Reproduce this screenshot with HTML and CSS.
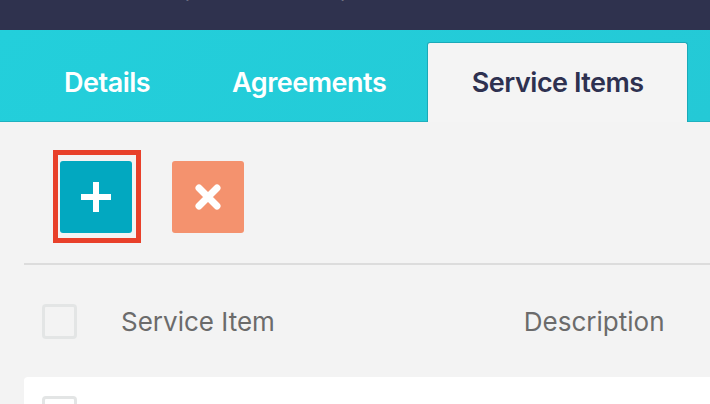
FILE: index.html
```html
<!DOCTYPE html>
<html>
<head>
<meta charset="utf-8">
<link rel="stylesheet" href="styles.css">
</head>
<body>
  <header class="topbar">
    <div class="crumbs">Customer Site / Maintenance / Contracts</div>
  </header>
  <nav class="tabs">
    <div class="tab">Details</div>
    <div class="tab">Agreements</div>
    <div class="tab active">Service Items</div>
  </nav>
  <main class="content">
    <div class="toolbar">
      <div class="highlight">
        <button class="btn btn-add" aria-label="Add">
          <svg width="30" height="30" viewBox="0 0 30 30"><path d="M12 0h6v12h12v6H18v12h-6V18H0v-6h12z" fill="#fff"/></svg>
        </button>
      </div>
      <button class="btn btn-del" aria-label="Delete">
        <svg width="28" height="28" viewBox="0 0 28 28"><path d="M5 5L23 23M23 5L5 23" stroke="#fff" stroke-width="7" stroke-linecap="round"/></svg>
      </button>
    </div>
    <div class="divider"></div>
    <div class="thead">
      <span class="check"></span>
      <span class="col col-item">Service Item</span>
      <span class="col col-desc">Description</span>
    </div>
    <div class="row">
      <span class="check"></span>
    </div>
  </main>
</body>
</html>
```
FILE: styles.css
```css
html, body {
  margin: 0;
  padding: 0;
  background: #f3f3f3;
  font-family: Inter, "Noto Sans", sans-serif;
  overflow: hidden;
}
.topbar {
  height: 30px;
  background: #2f324e;
  overflow: hidden;
}
.crumbs {
  color: #fff;
  font-size: 21px;
  line-height: 22px;
  margin-top: -20px;
  padding-left: 32px;
  word-spacing: 4px;
  white-space: nowrap;
}
.tabs {
  height: 91px;
  background: linear-gradient(135deg, #23cfdb, #24c9d6);
  border-bottom: 1px solid #1eb1bf;
  display: flex;
  align-items: flex-end;
  padding-left: 23px;
}
.tab {
  height: 80px;
  margin-bottom: -1px;
  padding: 0 41px;
  display: flex;
  align-items: center;
  font-size: 27px;
  font-weight: 600;
  color: #fff;
  letter-spacing: -0.5px;
  box-sizing: border-box;
}
.tab.active {
  background: #f4f4f4;
  color: #2e3150;
  border: 1px solid #1aa9b8;
  border-bottom: none;
  border-radius: 3px 3px 0 0;
  width: 261px;
  padding: 0;
  justify-content: center;
}
.content {
  padding-top: 28px;
}
.toolbar {
  display: flex;
  align-items: center;
  padding-left: 53px;
  gap: 31px;
}
.highlight {
  border: 5px solid #e8402a;
  padding: 6px 4px 5px 2px;
  display: flex;
}
.btn {
  width: 72px;
  height: 72px;
  border: none;
  border-radius: 3px;
  padding: 0;
  display: flex;
  align-items: center;
  justify-content: center;
}
.btn-add { background: #02a8c0; }
.btn-del { background: #f4926e; }
.divider {
  margin: 20px 0 0 24px;
  height: 2px;
  background: #dcdcdc;
}
.thead {
  height: 112px;
  display: flex;
  align-items: center;
  padding-left: 42px;
  color: #6b6b6b;
  font-size: 26px;
  letter-spacing: 0;
}
.check {
  display: block;
  width: 35px;
  height: 35px;
  box-sizing: border-box;
  border: 3px solid #e3e5e5;
  border-radius: 4px;
  flex: none;
}
.col-item { margin-left: 44px; }
.col-desc { margin-left: 249px; }
.row {
  margin-left: 24px;
  background: #fff;
  border-radius: 4px 0 0 0;
  height: 80px;
  padding: 19px 0 0 18px;
}
```
